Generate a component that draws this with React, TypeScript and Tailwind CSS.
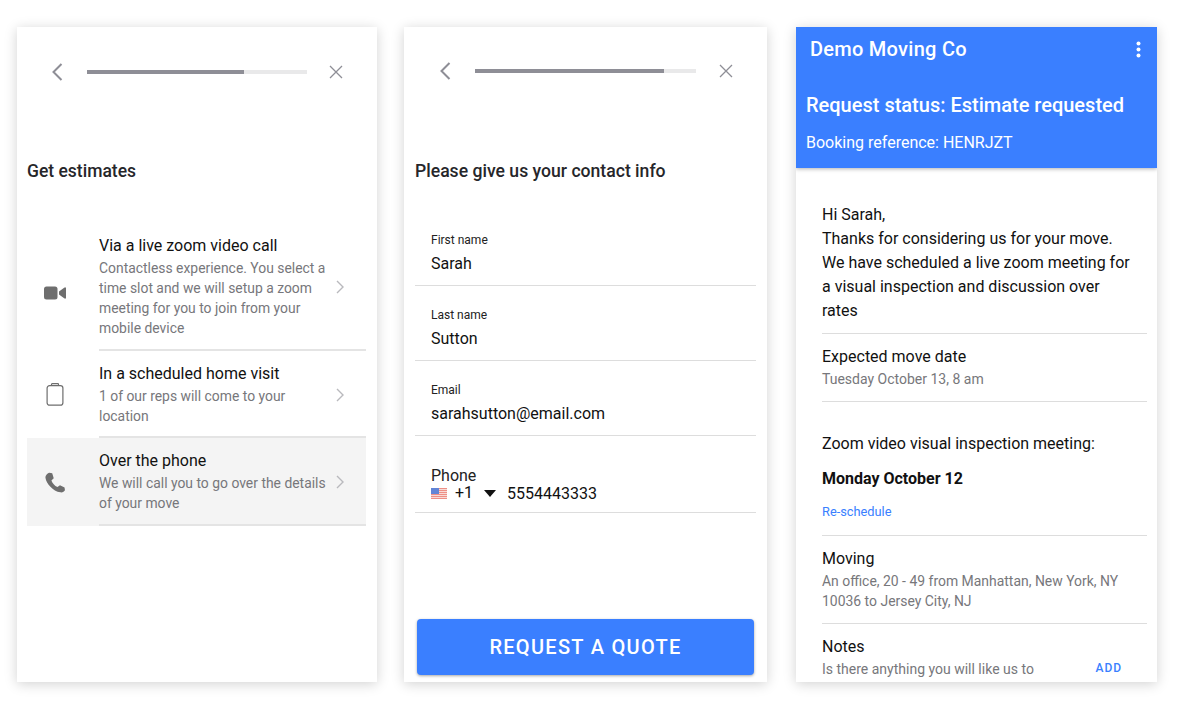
import React from "react";

const Chevron = () => (
  <svg width="10" height="14" viewBox="0 0 10 14" fill="none" stroke="#b9b9bd" strokeWidth="1.4" className="shrink-0">
    <path d="M2 1l6 6-6 6" />
  </svg>
);

const TopBar = ({ cls, track, fill, closeCls }: { cls: string; track: string; fill: string; closeCls: string }) => (
  <div className={cls}>
    <svg width="12" height="18" viewBox="0 0 12 18" fill="none" stroke="#8e8e96" strokeWidth="2" className="shrink-0">
      <path d="M10.5 1L2.5 9l8 8" />
    </svg>
    <div className={`h-1 bg-[#e9e9ea] shrink-0 ${track}`}>
      <div className={`h-1 bg-[#8e8e96] ${fill}`} />
    </div>
    <svg width="16" height="16" viewBox="0 0 16 16" fill="none" stroke="#8e8e96" strokeWidth="1.3" className={`shrink-0 ${closeCls}`}>
      <path d="M2 2l12 12M14 2L2 14" />
    </svg>
  </div>
);

const Row = ({
  icon,
  title,
  sub,
  bg,
  pt,
  pb,
}: {
  icon: React.ReactNode;
  title: string;
  sub: string[];
  bg?: string;
  pt: string;
  pb: string;
}) => (
  <div className={`flex items-center ${bg ?? ""}`}>
    <div className="w-[72px] shrink-0 flex justify-start pl-[17px]">{icon}</div>
    <div className={`flex-1 flex items-center border-b-2 border-[#e4e4e4] ${pt} ${pb}`}>
      <div className="w-[236px] shrink-0">
        <div className="text-[16px] leading-[22px] mb-[1px] text-[#111]">{title}</div>
        {sub.map((s) => (
          <div key={s} className="text-[13.9px] leading-[20px] text-[#77777b] whitespace-nowrap">
            {s}
          </div>
        ))}
      </div>
      <Chevron />
    </div>
  </div>
);

const Field = ({ label, value, cls }: { label: string; value: string; cls: string }) => (
  <div className={`border-b border-[#dddddd] pl-4 ${cls}`}>
    <div className="text-[12px] leading-[14px] text-[#222]">{label}</div>
    <div className="mt-[7px] text-[16px] leading-[20px] text-[#111]">{value}</div>
  </div>
);

const Flag = () => (
  <svg width="16" height="11" viewBox="0 0 16 11" className="shrink-0">
    <rect width="16" height="11" fill="#ee8f86" />
    <path d="M0 1.5h16M0 3.5h16M0 5.5h16M0 7.5h16M0 9.5h16" stroke="#f8e2df" strokeWidth="0.9" />
    <rect width="8" height="6" fill="#6285d6" />
  </svg>
);

export default function App() {
  return (
    <div
      className="w-[1180px] h-[714px] bg-white flex pl-[17px] pt-[27px] overflow-hidden"
      style={{ fontFamily: "Roboto, sans-serif" }}
    >
      {/* Panel 1 */}
      <div className="w-[360px] h-[655px] bg-white shadow-[0_2px_12px_rgba(0,0,0,0.18)] shrink-0 pl-[10px] pr-[11px]">
        <TopBar
          cls="flex items-center pl-[24px] pt-[36px] h-[54px]"
          track="ml-[24px] w-[220px]"
          fill="w-[157px]"
          closeCls="ml-[21px]"
        />
        <div className="mt-[80px] text-[17.5px] leading-[20px] font-medium text-[#26262a]">Get estimates</div>
        <div className="mt-[54px]">
          <Row
            pt="pt-[0px]"
            pb="pb-[11px]"
            title="Via a live zoom video call"
            sub={["Contactless experience. You select a", "time slot and we will setup a zoom", "meeting for you to join from your", "mobile device"]}
            icon={
              <svg width="22" height="14" viewBox="0 0 22 14" fill="#6e6e6e">
                <rect x="0" y="0.5" width="13.500" height="13" rx="2.500" />
                <path d="M15 5.500l5.500-4h1.500v11h-1.500l-5.500-4z" />
              </svg>
            }
          />
          <Row
            pt="pt-[12px]"
            pb="pb-[10px]"
            title="In a scheduled home visit"
            sub={["1 of our reps will come to your", "location"]}
            icon={
              <svg width="18" height="23" viewBox="0 0 18 23" fill="none" stroke="#6e6e6e" strokeWidth="1.2" className="ml-[2px]">
                <rect x="1.100" y="2.600" width="15.800" height="19.600" rx="2.500" />
                <path d="M5.500 2.600V1.400c0-.4.3-.7.7-.7h5.600c.4 0 .7.3.7.7v1.200" />
              </svg>
            }
          />
          <Row
            bg="bg-[#f4f4f4]"
            pt="pt-[12px]"
            pb="pb-[11px]"
            title="Over the phone"
            sub={["We will call you to go over the details", "of your move"]}
            icon={
              <svg width="23" height="23" viewBox="0 0 24 24" fill="#6e6e6e" className="ml-[-1px]">
                <path d="M6.600 1.800l3 .6 1.600 5.200-2.400 2.200c.9 2.600 3.400 5.600 6.300 6.900l2.600-1.900 4.800 2.400.4 3c-.8 1.500-2.800 2.600-4.800 2.100C10.300 20.800 3.500 13 2.600 7.200 2.300 4.800 4.400 2.400 6.600 1.800z" />
              </svg>
            }
          />
        </div>
      </div>

      {/* Panel 2 */}
      <div className="ml-[27px] w-[363px] h-[655px] bg-white shadow-[0_2px_12px_rgba(0,0,0,0.18)] shrink-0 pl-[11px] pr-[11px] flex flex-col">
        <TopBar
          cls="flex items-center pl-[24px] pt-[35px] h-[53px]"
          track="ml-[24px] w-[221px]"
          fill="w-[189px]"
          closeCls="ml-[22px]"
        />
        <div className="mt-[81px] text-[17.6px] leading-[20px] font-medium text-[#26262a]">Please give us your contact info</div>
        <Field cls="mt-[52px] pb-[11px]" label="First name" value="Sarah" />
        <Field cls="mt-[22px] pb-[11px]" label="Last name" value="Sutton" />
        <Field cls="mt-[22px] pb-[11px]" label="Email" value="sarahsutton@email.com" />
        <div className="mt-[31px] border-b border-[#dddddd] pl-4 pb-[10px]">
          <div className="text-[16px] leading-[17px] text-[#222]">Phone</div>
          <div className="flex items-center h-[18px] text-[16px] text-[#111]">
            <Flag />
            <span className="ml-[8px] w-[21px]">+1</span>
            <svg width="12" height="7" viewBox="0 0 12 7" fill="#111" className="ml-[8px]">
              <path d="M0 0h12L6 7z" />
            </svg>
            <span className="ml-[11px] mt-[2px]">5554443333</span>
          </div>
        </div>
        <button className="mt-auto mb-[7px] mx-[2px] h-[56px] rounded-[4px] bg-[#3a7fff] text-white text-[20px] font-medium tracking-[1.3px] shadow-[0_1px_3px_rgba(0,0,0,0.35)]">
          REQUEST A QUOTE
        </button>
      </div>

      {/* Panel 3 */}
      <div className="ml-[29px] w-[361px] h-[655px] bg-white shadow-[0_2px_12px_rgba(0,0,0,0.18)] shrink-0 overflow-hidden">
        <div className="h-[141px] bg-[#3a7fff] shadow-[0_1px_4px_rgba(0,0,0,0.3)] text-white relative">
          <div className="flex items-center justify-between pl-[14px] pr-[16px] pt-[10px]">
            <span className="text-[20px] leading-[25px] font-medium tracking-[0.27px]">Demo Moving Co</span>
            <svg width="5" height="17" viewBox="0 0 5 17" fill="#fff">
              <circle cx="2.500" cy="2.500" r="2" />
              <circle cx="2.500" cy="8.500" r="2" />
              <circle cx="2.500" cy="14.500" r="2" />
            </svg>
          </div>
          <div className="mt-[30px] pl-[10px] text-[20px] leading-[26px] font-medium">Request status: Estimate requested</div>
          <div className="mt-[15px] pl-[10px] text-[16px] leading-[20px]">Booking reference: HENRJZT</div>
        </div>
        <div className="pl-[26px] pr-[10px]">
          <div className="pt-[35px] pb-[10px] border-b border-[#dddddd] text-[16px] leading-[24px] text-[#111]">
            <div>Hi Sarah,</div>
            <div>Thanks for considering us for your move.</div>
            <div>We have scheduled a live zoom meeting for</div>
            <div>a visual inspection and discussion over</div>
            <div>rates</div>
          </div>
          <div className="pt-[13px] pb-[10px] border-b border-[#dddddd]">
            <div className="text-[16px] leading-[20px] text-[#111]">Expected move date</div>
            <div className="text-[14px] leading-[24px] text-[#77777b]">Tuesday October 13, 8 am</div>
          </div>
          <div className="pt-[30px] pb-[13px] border-b border-[#dddddd]">
            <div className="text-[16px] leading-[24px] text-[#111]">Zoom video visual inspection meeting:</div>
            <div className="mt-[11px] text-[16px] leading-[24px] font-bold text-[#111]">Monday October 12</div>
            <div className="mt-[11px] text-[12.8px] leading-[20px] text-[#3a7fff]">Re-schedule</div>
          </div>
          <div className="pt-[13px] pb-[12px] border-b border-[#dddddd]">
            <div className="text-[16px] leading-[20px] text-[#111]">Moving</div>
            <div className="text-[13.95px] leading-[20px] text-[#77777b] mt-[2px]">An office, 20 - 49 from Manhattan, New York, NY</div>
            <div className="text-[13.95px] leading-[20px] text-[#77777b]">10036 to Jersey City, NJ</div>
          </div>
          <div className="pt-[13px]">
            <div className="text-[16px] leading-[20px] text-[#111]">Notes</div>
            <div className="flex items-center justify-between pr-[25px]">
              <span className="text-[14px] leading-[24px] text-[#77777b]">Is there anything you will like us to</span>
              <span className="text-[12px] mb-[3px] font-medium tracking-[0.08em] text-[#3a7fff]">ADD</span>
            </div>
          </div>
        </div>
      </div>
    </div>
  );
}
